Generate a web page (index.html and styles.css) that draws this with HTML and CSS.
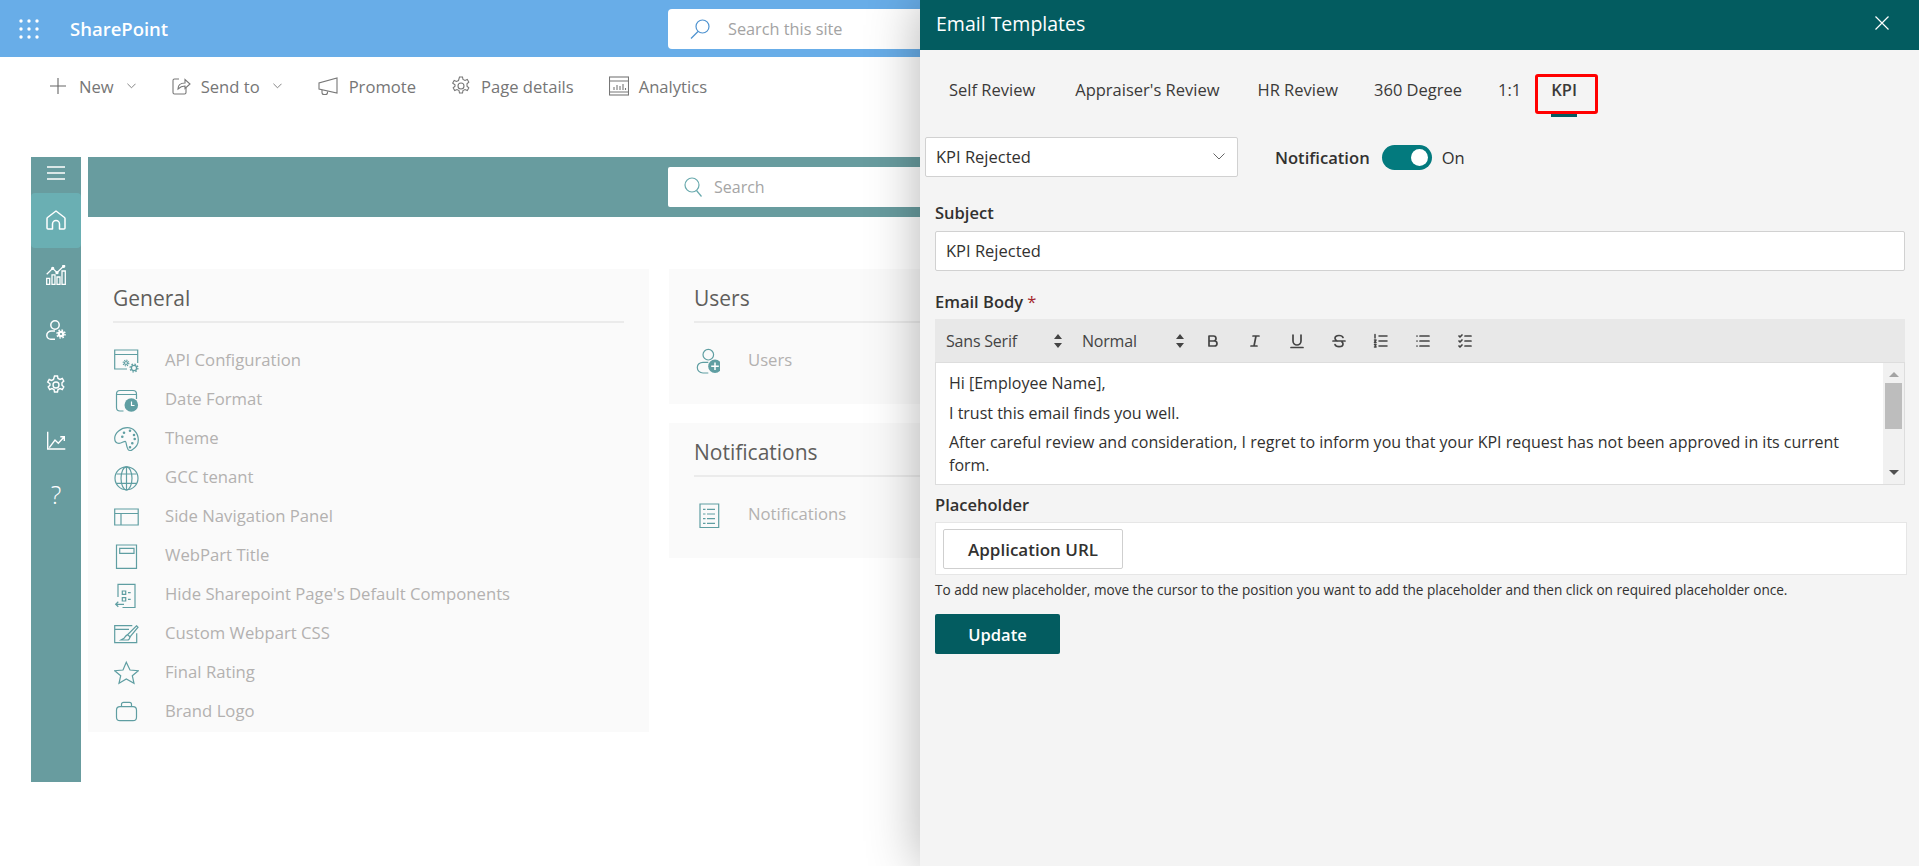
FILE: index.html
```html
<!DOCTYPE html>
<html lang="en">
<head>
    <meta charset="UTF-8">
    <title>Email Templates</title>
    <link rel="stylesheet" href="styles.css">
</head>
<body>
<div class="suite-bar">
    <svg class="waffle" viewBox="0 0 20 20" fill="#fff">
        <circle cx="2" cy="2" r="1.7"/><circle cx="10" cy="2" r="1.7"/><circle cx="18" cy="2" r="1.7"/>
        <circle cx="2" cy="10" r="1.7"/><circle cx="10" cy="10" r="1.7"/><circle cx="18" cy="10" r="1.7"/>
        <circle cx="2" cy="18" r="1.7"/><circle cx="10" cy="18" r="1.7"/><circle cx="18" cy="18" r="1.7"/>
    </svg>
    <span class="brand">SharePoint</span>
    <div class="site-search">
        <svg class="site-search-icon" viewBox="0 0 20 20" fill="none" stroke="#4f93d0" stroke-width="1.2">
            <circle cx="12.5" cy="7.5" r="6.5"/><path d="M8 12.5L1 19.5"/>
        </svg>
        <span>Search this site</span>
    </div>
</div>

<div class="command-bar">
    <div class="cmd">
        <svg class="cmd-icon cmd-icon-plus" viewBox="0 0 16 16" fill="none" stroke="#666" stroke-width="1.1"><path d="M8 0v16M0 8h16"/></svg>
        <span>New</span>
        <svg class="cmd-chevron" viewBox="0 0 10 6" fill="none" stroke="#777"><path d="M.5.5L5 5 9.5.5"/></svg>
    </div>
    <div class="cmd">
        <svg class="cmd-icon" viewBox="0 0 20 20" fill="none" stroke="#777" stroke-width="1.1"><path d="M8 3H3.5A1.5 1.5 0 0 0 2 4.500v12A1.500 1.500 0 0 0 3.500 18h10a1.500 1.500 0 0 0 1.500-1.500V12"/><path d="M7 13c0-4 3-6 7-6V3.500L19 8l-5 4.500V10c-3 0-5 1-7 3z"/></svg>
        <span>Send to</span>
        <svg class="cmd-chevron" viewBox="0 0 10 6" fill="none" stroke="#777"><path d="M.5.5L5 5 9.5.5"/></svg>
    </div>
    <div class="cmd">
        <svg class="cmd-icon cmd-icon-wide" viewBox="0 0 22 20" fill="none" stroke="#777" stroke-width="1.1"><path d="M20 2v15L2 13V7z"/><path d="M5 14v2.500a2 2 0 0 0 2 2h1.500a2 2 0 0 0 2-2V15.500"/></svg>
        <span>Promote</span>
    </div>
    <div class="cmd">
        <svg class="cmd-icon" viewBox="0 0 20 20" fill="none" stroke="#777" stroke-width="1.1"><circle cx="10" cy="10" r="3"/><path d="M8.500 1h3l.5 2.500 2 1 2.300-1 1.500 2.600-1.800 1.700v2.400l1.800 1.700-1.500 2.600-2.300-1-2 1-.5 2.500h-3l-.5-2.500-2-1-2.300 1-1.500-2.600 1.800-1.700V8.800L1.700 7.100l1.500-2.600 2.300 1 2-1z"/></svg>
        <span>Page details</span>
    </div>
    <div class="cmd">
        <svg class="cmd-icon" viewBox="0 0 20 20" fill="none" stroke="#777" stroke-width="1.1"><rect x=".5" y="1" width="19" height="18"/><path d="M.5 5h19M.5 16h19M5 14v-3M8 14V9M11 14v-4M14 14V8M16.500 14v-2"/></svg>
        <span>Analytics</span>
    </div>
</div>

<div class="workspace">
    <nav class="side-nav">
        <div class="nav-toggle">
            <svg class="nav-icon" viewBox="0 0 20 14" fill="none" stroke="#fff" stroke-width="1.300"><path d="M1 1h18M1 7h18M1 13h18"/></svg>
        </div>
        <div class="nav-item nav-item-active">
            <svg class="nav-icon" viewBox="0 0 20 20" fill="none" stroke="#fff" stroke-width="1.500" stroke-linejoin="round"><path d="M1 18V8.500a1.500 1.500 0 0 1 .5-1L10 1l8.500 6.500a1.500 1.500 0 0 1 .5 1V18a1 1 0 0 1-1 1h-4.500v-5a3.500 3.500 0 0 0-7 0v5H2a1 1 0 0 1-1-1z"/></svg>
        </div>
        <div class="nav-item">
            <svg class="nav-icon" viewBox="0 0 20 20" fill="none" stroke="#fff" stroke-width="1.300"><path d="M.7 9.300l6-6L11 7.700 17.700 1"/><circle cx="6.700" cy="3.300" r="1" fill="#fff"/><circle cx="11" cy="7.700" r="1" fill="#fff"/><circle cx="17.700" cy="1.300" r="1" fill="#fff"/><path d="M.7 19.400v-6h3v6zM6 19.400V9.800h3v9.600zM11 19.400V12h3v7.400zM16 19.400V6h3.300v13.400z"/></svg>
        </div>
        <div class="nav-item">
            <svg class="nav-icon" viewBox="0 0 20 20" fill="none" stroke="#fff" stroke-width="1.500"><circle cx="9" cy="5" r="4.200"/><path d="M9 11H5.500C2.800 11 .8 12.800 .8 15.200s2 4.100 4.700 4.100H9"/><circle cx="15" cy="14" r="3.300" fill="#fff" stroke="none"/><circle cx="15" cy="14" r="4" stroke-width="1.500" stroke-dasharray="1.600 1.540"/><circle cx="15" cy="14" r="1.100" fill="#689c9f" stroke="none"/></svg>
        </div>
        <div class="nav-item">
            <svg class="nav-icon" viewBox="0 0 20 20" fill="none" stroke="#fff" stroke-width="1.400"><circle cx="10" cy="10" r="3"/><path d="M8.500 1h3l.5 2.500 2 1 2.300-1 1.500 2.600-1.800 1.700v2.400l1.800 1.700-1.500 2.600-2.300-1-2 1-.5 2.500h-3l-.5-2.500-2-1-2.300 1-1.500-2.600 1.800-1.700V8.800L1.700 7.100l1.500-2.600 2.300 1 2-1z"/></svg>
        </div>
        <div class="nav-item">
            <svg class="nav-icon" viewBox="0 0 20 20" fill="none" stroke="#fff" stroke-width="1.400"><path d="M1.700 1.700V19h17.600M3.300 17.700L9 10l3.300 3.300 6-6.600M14.300 6.700h4V11"/></svg>
        </div>
        <div class="nav-item"><span class="nav-help">?</span></div>
    </nav>

    <div class="content">
        <div class="top-band">
            <div class="band-search">
                <svg class="band-search-icon" viewBox="0 0 18 20" fill="none" stroke="#68a9ad" stroke-width="1.200"><circle cx="8" cy="8" r="7"/><path d="M12.500 13.500l5 6"/></svg>
                <span>Search</span>
            </div>
        </div>
        <div class="cards">
            <section class="card card-general">
                <h2 class="card-title">General</h2>
                <div class="card-rows">
                    <div class="row">
                        <svg class="row-icon" viewBox="0 0 25 28"><path d="M13 23H.7V4h23v13M.7 8.500h23"/><circle cx="20" cy="22" r="2.600" stroke-width="1.300"/><circle cx="20" cy="22" r="3.900" stroke-width="1.300" stroke-dasharray="1.500 1.560"/><circle cx="12" cy="17" r="1.500"/><circle cx="12" cy="17" r="2.800" stroke-dasharray="1.200 1"/></svg>
                        <span>API Configuration</span>
                    </div>
                    <div class="row">
                        <svg class="row-icon" viewBox="0 0 25 28"><path d="M9.500 26H6a3.500 3.500 0 0 1-3.500-3.500V9A3.500 3.500 0 0 1 6 5.500h13A3.500 3.500 0 0 1 22.500 9v5M2.500 9.500h20"/><circle cx="17.300" cy="20" r="6.800" fill="#5f9ea2" stroke="none"/><path d="M17.500 16.500V20.500h3" stroke="#fff"/></svg>
                        <span>Date Format</span>
                    </div>
                    <div class="row">
                        <svg class="row-icon" viewBox="0 0 25 28"><path d="M13.300 3.700C7 3.700 .7 9 .7 14.300c0 3.500 2.300 5 4.300 5 3 0 6-3 6.700-1.600 .8 1.500 .5 4.600 2.300 7.600 1 1.500 3 1.500 4.300 .4C22 23.500 24.300 20 24.300 16c0-7-5-12.300-11-12.300z"/><circle cx="10" cy="8.700" r=".7"/><circle cx="16" cy="6.700" r=".7"/><circle cx="20" cy="11" r=".7"/><circle cx="20.700" cy="15" r=".7"/><circle cx="18.300" cy="19.300" r=".7"/><circle cx="16" cy="23.300" r=".7"/><circle cx="8.300" cy="12.700" r=".7"/></svg>
                        <span>Theme</span>
                    </div>
                    <div class="row">
                        <svg class="row-icon" viewBox="0 0 25 28"><circle cx="12.500" cy="15.300" r="11.500"/><ellipse cx="12.500" cy="15.300" rx="5.500" ry="11.500"/><path d="M12.500 3.800v23M2.500 11h20M2.500 20.300h20"/></svg>
                        <span>GCC tenant</span>
                    </div>
                    <div class="row">
                        <svg class="row-icon" viewBox="0 0 25 28"><path d="M.7 7h23.500v16H.7zM.7 11.500h23.500M7 11.500V23"/></svg>
                        <span>Side Navigation Panel</span>
                    </div>
                    <div class="row">
                        <svg class="row-icon" viewBox="0 0 25 28"><path d="M2.500 4h20v23.300h-20z"/><path d="M5.700 7.300H20v5H5.700z"/></svg>
                        <span>WebPart Title</span>
                    </div>
                    <div class="row">
                        <svg class="row-icon" viewBox="0 0 25 28"><path d="M4 17V4.300h17v23.400H8.500"/><path d="M8.300 11h3.400v3.300H8.300zM8.300 17.700h3.400V21H8.300zM14 12.700h2.700M14 19.300h2.700M10 24.300H1.700M4.300 21.800l-2.600 2.500 2.600 2.500"/></svg>
                        <span>Hide Sharepoint Page's Default Components</span>
                    </div>
                    <div class="row">
                        <svg class="row-icon" viewBox="0 0 25 28"><path d="M18.300 6.700H.7v17h22V14.300M.7 10.300H15"/><path d="M22.500 6.800l1.500 1.400-8 9.600-2.500-2z"/><path d="M13.500 15.800c-2 .5-2.500 2.500-3.500 3.500l-3 1.700h6.500c1.500 0 2.200-1.700 2.500-3.200"/></svg>
                        <span>Custom Webpart CSS</span>
                    </div>
                    <div class="row">
                        <svg class="row-icon" viewBox="0 0 25 28"><path d="M12.300 4.300L16 12l8.300 .7-6 5 1.700 7.600-7.700-4.300-7.300 4.300 1.700-7.600-6-5L9 12z"/></svg>
                        <span>Final Rating</span>
                    </div>
                    <div class="row">
                        <svg class="row-icon" viewBox="0 0 25 28"><rect x="2.500" y="9.700" width="20" height="14" rx="3.500"/><path d="M7.500 9.700V7.300a2 2 0 0 1 2-2h6a2 2 0 0 1 2 2v2.400"/></svg>
                        <span>Brand Logo</span>
                    </div>
                </div>
            </section>

            <div class="card-stack">
                <section class="card">
                    <h2 class="card-title">Users</h2>
                    <div class="card-rows">
                        <div class="row">
                            <svg class="row-icon" viewBox="0 0 25 28"><circle cx="13.300" cy="8.700" r="5.300"/><path d="M13.300 16.300H8c-3.300 0-5.700 2.200-5.700 5.200S4.700 27 8 27h5.300"/><circle cx="20" cy="20.300" r="6.800" fill="#5f9ea2" stroke="none"/><path d="M20 16.500v7.600M16.200 20.300h7.600" stroke="#fff" stroke-width="1.500"/></svg>
                            <span>Users</span>
                        </div>
                    </div>
                </section>
                <section class="card">
                    <h2 class="card-title">Notifications</h2>
                    <div class="card-rows">
                        <div class="row">
                            <svg class="row-icon" viewBox="0 0 25 28"><path d="M5 4h18.700v23.700H5z"/><path d="M8 9.300h2.500M12 9.300h8M8 14h2.500M12 14h8M8 18.700h2.500M12 18.700h8M8 23.300h2.500M12 23.300h8"/></svg>
                            <span>Notifications</span>
                        </div>
                    </div>
                </section>
            </div>
        </div>
    </div>
</div>

<aside class="panel">
    <header class="panel-head">
        <span class="panel-title">Email Templates</span>
        <svg class="panel-close" viewBox="0 0 14 14" fill="none" stroke="#fff" stroke-width="1.200"><path d="M.5.5l13 13M13.500.5l-13 13"/></svg>
    </header>

    <div class="tabs">
        <span class="tab">Self Review</span>
        <span class="tab">Appraiser's Review</span>
        <span class="tab">HR Review</span>
        <span class="tab">360 Degree</span>
        <span class="tab">1:1</span>
        <span class="tab tab-active">KPI<i class="tab-mark"></i></span>
    </div>

    <div class="panel-form">
        <div class="notify-row">
            <div class="dropdown">
                <span>KPI Rejected</span>
                <svg class="dropdown-chevron" viewBox="0 0 12 7" fill="none" stroke="#666"><path d="M.5.5L6 6 11.500.5"/></svg>
            </div>
            <span class="notify-label">Notification</span>
            <span class="switch"><i class="switch-knob"></i></span>
            <span class="switch-text">On</span>
        </div>

        <label class="field-label field-subject">Subject</label>
        <div class="text-input">KPI Rejected</div>

        <label class="field-label field-body">Email Body <em class="required">*</em></label>
        <div class="toolbar">
            <span class="tool-select tool-font">Sans Serif<svg class="tool-arrows" viewBox="0 0 8 14" fill="#444"><path d="M4 0l4 5H0zM4 14L0 9h8z"/></svg></span>
            <span class="tool-select tool-size">Normal<svg class="tool-arrows" viewBox="0 0 8 14" fill="#444"><path d="M4 0l4 5H0zM4 14L0 9h8z"/></svg></span>
            <svg class="tool-btn" viewBox="0 0 18 18"><path d="M5 4h4.500a2.500 2.500 0 0 1 0 5H5zM5 9h5.500a2.500 2.500 0 0 1 0 5H5z"/></svg>
            <svg class="tool-btn" viewBox="0 0 18 18"><path d="M7 4h6M5 14h6M8 14l2-10"/></svg>
            <svg class="tool-btn" viewBox="0 0 18 18"><path d="M5 3v6a4 4 0 0 0 8 0V3M3 15.500h12"/></svg>
            <svg class="tool-btn" viewBox="0 0 18 18"><path d="M3 9h12M13 5.500C12.500 4 11 3.500 9 3.500c-2.500 0-4 1-4 2.700 0 1 .5 2 2 2.800M5 12.500c.5 1.500 2 2.200 4 2.200 2.500 0 4-1 4-2.700 0-.8-.3-1.500-1-2"/></svg>
            <svg class="tool-btn" viewBox="0 0 18 18"><path d="M7 4h8M7 9h8M7 14h8M3 2.500V6M2.500 8h1.500l-1.500 2.500H4M2.500 12.500H4l-.8 1.200.8 1.300H2.500" stroke-width="1.500"/></svg>
            <svg class="tool-btn" viewBox="0 0 18 18"><path d="M6 4h9M6 9h9M6 14h9M3 4h.01M3 9h.01M3 14h.01"/></svg>
            <svg class="tool-btn" viewBox="0 0 18 18"><path d="M9 4h6M9 9h6M9 14h6M3 4l1 1 2-2M3 9l1 1 2-2M3 14l1 1 2-2" stroke-width="1.700"/></svg>
        </div>
        <div class="editor">
            <div class="editor-text">
                <p>Hi [Employee Name],</p>
                <p>I trust this email finds you well.</p>
                <p>After careful review and consideration, I regret to inform you that your KPI request has not been approved in its current form.</p>
            </div>
            <div class="scrollbar">
                <i class="scroll-up"></i>
                <i class="scroll-thumb"></i>
                <i class="scroll-down"></i>
            </div>
        </div>

        <label class="field-label field-placeholder">Placeholder</label>
        <div class="placeholder-box">
            <button class="placeholder-btn">Application URL</button>
        </div>
        <p class="hint">To add new placeholder, move the cursor to the position you want to add the placeholder and then click on required placeholder once.</p>
        <button class="update-btn">Update</button>
    </div>
</aside>
</body>
</html>
```

FILE: styles.css
```css
* {
    box-sizing: border-box;
}

html, body {
    height: 100%;
}

body {
    margin: 0;
    overflow: hidden;
    position: relative;
    background-color: #fff;
    font-family: "Open Sans", "Noto Sans", sans-serif;
    color: #323130;
}

/* suite bar */
.suite-bar {
    display: flex;
    align-items: center;
    height: 57px;
    padding-left: 19px;
    background-color: #68ade8;
}

.waffle {
    width: 20px;
    height: 20px;
}

.brand {
    width: 98px;
    margin-left: 31px;
    font-size: 18.500px;
    font-weight: 600;
    white-space: nowrap;
    color: #fff;
}

.site-search {
    display: flex;
    align-items: center;
    width: 420px;
    height: 40px;
    margin-left: 500px;
    padding-left: 22px;
    border-radius: 4px;
    background-color: #fff;
    font-size: 16.300px;
    color: #a3a3a3;
}

.site-search-icon {
    width: 20px;
    height: 20px;
    margin-right: 18px;
}

/* command bar */
.command-bar {
    display: flex;
    align-items: center;
    height: 60px;
    padding: 0 0 2px 50px;
    font-size: 16.600px;
    color: #767676;
}

.cmd {
    display: flex;
    align-items: center;
    margin-right: 35px;
}

.cmd-icon {
    width: 20px;
    height: 20px;
    margin-right: 10px;
}

.cmd-icon-plus {
    width: 16px;
    height: 16px;
    margin-right: 13px;
}

.cmd-icon-wide {
    width: 22px;
}

.cmd-chevron {
    width: 9px;
    height: 6px;
    margin-left: 13px;
}

/* page body */
.workspace {
    display: flex;
    margin-top: 40px;
    padding-left: 31px;
}

.side-nav {
    flex: none;
    width: 50px;
    height: 625px;
    background-color: #689c9f;
}

.nav-toggle {
    display: flex;
    align-items: center;
    justify-content: center;
    height: 36px;
    padding-bottom: 5px;
}

.nav-item {
    display: flex;
    align-items: center;
    justify-content: center;
    height: 55px;
    padding-bottom: 2px;
}

.nav-item-active {
    border-radius: 4px;
    background-color: #6aafb3;
}

.nav-icon {
    width: 20px;
    height: 20px;
}

.nav-help {
    font-size: 25px;
    font-weight: 300;
    line-height: 1;
    color: #fff;
}

.content {
    flex: none;
    width: 1000px;
    margin-left: 7px;
}

.top-band {
    height: 60px;
    padding: 10px 0 0 580px;
    background-color: #689c9f;
}

.band-search {
    display: flex;
    align-items: center;
    width: 400px;
    height: 40px;
    padding-left: 16px;
    border-radius: 2px;
    background-color: #fff;
    font-size: 16px;
    color: #a5a5a5;
}

.band-search-icon {
    width: 18px;
    height: 20px;
    margin-right: 12px;
}

.cards {
    display: flex;
    gap: 20px;
    margin-top: 52px;
}

.card {
    padding-bottom: 25px;
    background-color: #fafafa;
}

.card-general {
    width: 561px;
    height: 463px;
    padding-right: 25px;
}

.card-stack {
    display: flex;
    flex-direction: column;
    gap: 19px;
    width: 400px;
}

.card-title {
    height: 54px;
    margin: 0 0 17px 25px;
    padding-top: 14px;
    border-bottom: 2px solid #ebebeb;
    font-size: 21px;
    font-weight: 400;
    line-height: 30px;
    color: #605e5c;
}

.row {
    display: flex;
    align-items: center;
    height: 39px;
    padding-left: 26px;
    font-size: 16.700px;
    color: #b3b1b0;
}

.row-icon {
    flex: none;
    width: 25px;
    height: 28px;
    margin-right: 26px;
    fill: none;
    stroke: #5f9ea2;
    stroke-width: 1.200;
}

.card-stack .row-icon {
    margin-right: 28px;
}

/* email templates panel */
.panel {
    position: absolute;
    top: 0;
    right: 0;
    bottom: 0;
    width: 999px;
    background-color: #f4f4f4;
    box-shadow: 0 0 50px rgba(0, 0, 0, 0.3);
}

.panel-head {
    display: flex;
    align-items: center;
    justify-content: space-between;
    height: 50px;
    padding: 0 30px 4px 16px;
    background-color: #035c60;
    color: #fff;
}

.panel-title {
    font-size: 19.500px;
}

.panel-close {
    width: 14px;
    height: 14px;
}

.tabs {
    display: flex;
    gap: 36px;
    height: 40px;
    margin-top: 24px;
    padding-left: 29px;
    font-size: 16.500px;
    line-height: 32px;
    color: #3b3a39;
}

.tab {
    position: relative;
    white-space: nowrap;
}

.tab:nth-child(1) {
    margin-right: 4px;
}

.tab:nth-child(2) {
    margin-right: 2px;
}

.tab:nth-child(5) {
    margin-right: -6px;
}

.tab-active {
    font-weight: 600;
}

/* underline of the selected tab */
.tab-active::after {
    content: "";
    position: absolute;
    left: 0;
    right: 0;
    top: 40px;
    height: 3px;
    background-color: #035c60;
}

.tab-mark {
    position: absolute;
    top: 0;
    bottom: 0;
    left: -16px;
    right: -21px;
    border: 3px solid #f00;
    border-radius: 3px;
}

.panel-form {
    padding: 0 14px 0 15px;
}

.notify-row {
    display: flex;
    align-items: center;
    height: 40px;
    margin: 23px 0 0 -10px;
}

.dropdown {
    display: flex;
    align-items: center;
    justify-content: space-between;
    width: 313px;
    height: 40px;
    padding: 0 12px 1px 10px;
    border: 1px solid #d1d1d1;
    border-radius: 2px;
    background-color: #fff;
    font-size: 16.500px;
}

.dropdown-chevron {
    width: 12px;
    height: 7px;
}

.notify-label {
    margin-left: 37px;
    font-size: 16.600px;
    font-weight: 600;
}

.switch {
    display: flex;
    align-items: center;
    justify-content: flex-end;
    width: 50px;
    height: 25px;
    margin-left: 12px;
    padding-right: 4px;
    border-radius: 13px;
    background-color: #037a7e;
}

.switch-knob {
    width: 17px;
    height: 17px;
    border-radius: 50%;
    background-color: #fff;
}

.switch-text {
    margin-left: 10px;
    font-size: 16.500px;
}

.field-label {
    display: block;
    height: 20px;
    font-size: 16.500px;
    font-weight: 600;
    line-height: 20px;
}

.field-subject {
    margin-top: 26px;
}

.field-body {
    margin-top: 21px;
}

.field-placeholder {
    margin-top: 10px;
}

.required {
    font-style: normal;
    font-weight: 400;
    color: #a4262c;
}

.text-input {
    display: flex;
    align-items: center;
    height: 40px;
    margin-top: 8px;
    padding: 0 0 1px 10px;
    border: 1px solid #d1d1d1;
    border-radius: 2px;
    background-color: #fff;
    font-size: 16.500px;
}

.toolbar {
    display: flex;
    align-items: center;
    height: 43px;
    margin-top: 7px;
    padding-left: 11px;
    background-color: #e8e8e8;
    font-size: 16px;
    letter-spacing: -0.2px;
    color: #444;
}

.tool-select {
    display: flex;
    align-items: center;
    justify-content: space-between;
}

.tool-font {
    width: 116px;
}

.tool-size {
    width: 102px;
    margin-left: 20px;
}

.tool-arrows {
    width: 8px;
    height: 14px;
}

.tool-btn {
    width: 18px;
    height: 18px;
    margin: 0 12px;
    fill: none;
    stroke: #444;
    stroke-width: 1.700;
    stroke-linecap: round;
    stroke-linejoin: round;
}

.tool-size + .tool-btn {
    margin-left: 20px;
}

.editor {
    display: flex;
    height: 123px;
    border: 1px solid #ddd;
    background-color: #fff;
}

.editor-text {
    flex: 1;
    padding: 9px 30px 0 13px;
    font-size: 16px;
    line-height: 23px;
}

.editor-text p {
    margin: 0 0 6.500px;
}

.editor-text p:last-child {
    margin-bottom: 0;
}

.scrollbar {
    display: flex;
    flex: none;
    flex-direction: column;
    align-items: center;
    width: 21px;
    background-color: #f1f1f1;
}

.scroll-up {
    margin-top: 9px;
    border: 5px solid transparent;
    border-top: 0;
    border-bottom-color: #a3a3a3;
}

.scroll-thumb {
    width: 17px;
    height: 46px;
    margin-top: 6px;
    background-color: #bdbdbd;
}

.scroll-down {
    margin-top: auto;
    margin-bottom: 9px;
    border: 5px solid transparent;
    border-bottom: 0;
    border-top-color: #505050;
}

.placeholder-box {
    width: 972px;
    height: 53px;
    margin-top: 7px;
    padding: 6px 7px;
    border: 1px solid #e6e6e6;
    background-color: #fff;
}

.placeholder-btn {
    width: 180px;
    height: 40px;
    border: 1px solid #cfcfcf;
    border-radius: 2px;
    background-color: #fff;
    font-family: inherit;
    font-size: 17px;
    font-weight: 600;
    color: #323130;
}

.hint {
    height: 18px;
    margin: 6px 0 0;
    font-size: 13.600px;
    line-height: 18px;
    white-space: nowrap;
}

.update-btn {
    display: block;
    width: 125px;
    height: 40px;
    margin-top: 15px;
    border: 0;
    border-radius: 2px;
    background-color: #035c60;
    font-family: inherit;
    font-size: 16.500px;
    font-weight: 600;
    color: #fff;
}
```
